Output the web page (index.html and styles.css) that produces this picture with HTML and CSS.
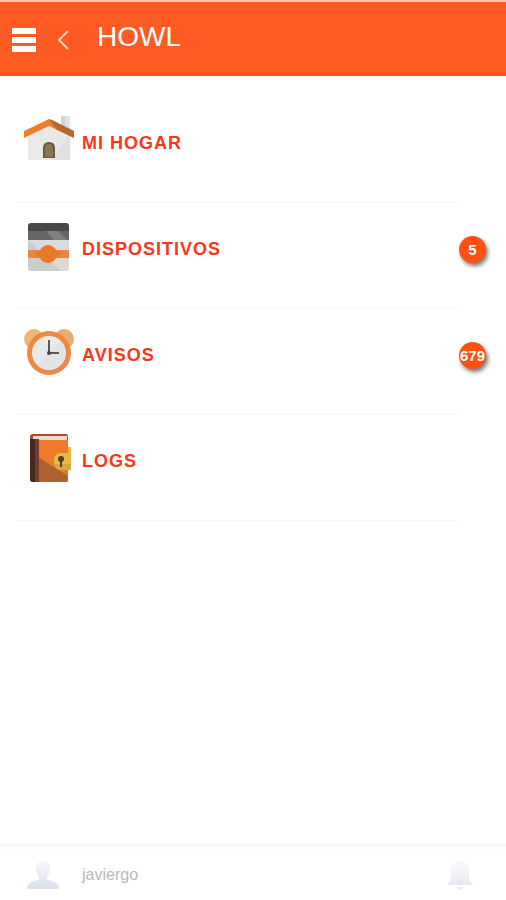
FILE: index.html
```html
<!DOCTYPE html>
<html lang="es">
<head>
<meta charset="utf-8">
<meta name="viewport" content="width=device-width, initial-scale=1">
<title>HOWL</title>
<link rel="stylesheet" href="styles.css">
</head>
<body>
<header class="bar">
  <button class="icon-button" type="button" aria-label="Menú">
    <svg width="24" height="24" viewBox="0 0 24 24" fill="#fff"><path d="M0 0h24v6H0zM0 9h24v6H0zM0 18h24v6H0z"/></svg>
  </button>
  <button class="icon-button back" type="button" aria-label="Volver">
    <svg width="12" height="20" viewBox="0 0 12 20" fill="none" stroke="#ffcdb8" stroke-width="2"><path d="M10 1 1 10l9 9"/></svg>
  </button>
  <h1 class="title">HOWL</h1>
</header>
<main class="content">
  <ul class="menu">
    <li class="item">
      <a class="link" href="#hogar">
        <svg class="picture" width="52" height="52" viewBox="0 0 52 52">
          <path fill="#e2e4e4" d="M38 1h9v19h-9z"/>
          <path fill="#d3d6d7" d="M38 1h4v12h-4z"/>
          <path fill="#e9e9e7" d="M26 8 5 18v27h42V18z"/>
          <path fill="#e1e1df" d="M47 18v27H28z"/>
          <path fill="#ed802f" d="M26 4 1 16v7l25-12 25 12v-7z"/>
          <path fill="#b76732" d="m26 4 3 1 8 11-3-1z"/>
          <path fill="#b76732" d="m29 5 22 11v7l-14-7z"/>
          <path fill="#685a42" d="M20 43V33q0-6 6-6t6 6v10z"/>
          <path fill="#8b7653" d="M22 42V33q0-4 4-4t4 4v9z"/>
        </svg>
        <span class="label">MI HOGAR</span>
      </a>
    </li>
    <li class="item">
      <a class="link" href="#dispositivos">
        <svg class="picture" width="52" height="52" viewBox="0 0 52 52">
          <path fill="#d9dcda" d="M5 16h41v31q0 3-3 3H8q-3 0-3-3z"/>
          <path fill="#c9cdcb" d="M5 19 38 50H8q-3 0-3-3z"/>
          <path fill="#666" d="M5 7h41v12H5z"/>
          <path fill="#808080" d="M23 10h12l9 9H31z"/>
          <path fill="#484848" d="M8 2h35q3 0 3 3v5H5V5q0-3 3-3z"/>
          <path fill="#ec8540" d="M5 29h41v8H5z"/>
          <circle cx="25" cy="33" r="9" fill="#ed7728"/>
          <path fill="#ed7728" d="m11 33 14-9 15 9-15 9z"/>
        </svg>
        <span class="label">DISPOSITIVOS</span>
        <span class="badge">5</span>
      </a>
    </li>
    <li class="item">
      <a class="link" href="#avisos">
        <svg class="picture" width="52" height="52" viewBox="0 0 52 52">
          <circle cx="11" cy="12" r="10" fill="#efb675"/>
          <circle cx="41" cy="12" r="10" fill="#e8ad6d"/>
          <circle cx="26" cy="26" r="22" fill="#ec8945"/>
          <circle cx="26" cy="26" r="17" fill="#e9ebeb"/>
          <path fill="#d9dcdd" d="M14 38A17 17 0 0 0 38 14z" opacity=".4"/>
          <path fill="none" stroke="#555a5b" stroke-width="2" d="M26 13v13h10"/>
          <circle cx="26" cy="26" r="2" fill="#444"/>
        </svg>
        <span class="label">AVISOS</span>
        <span class="badge">679</span>
      </a>
    </li>
    <li class="item">
      <a class="link" href="#logs">
        <svg class="picture" width="52" height="52" viewBox="0 0 52 52">
          <path fill="#a94f26" d="M10 1h33q2 0 2 3v43q0 2-2 2H10q-3 0-3-3V4q0-3 3-3z"/>
          <path fill="#eddcd0" d="M10 3h34v4H10z"/>
          <path fill="#ef792b" d="M15 7h30v40L15 25z"/>
          <path fill="#af602e" d="m15 24 30 19v4q0 2-2 2H15z"/>
          <path fill="#4b2722" d="M7 6h5v43h-2q-3 0-3-3z"/>
          <path fill="#713c28" d="M12 6h4v43h-4z"/>
          <path fill="#e9b943" d="M45 14h3v23H36q-5-3-5-9t5-8h9z"/>
          <path fill="#d7a83f" d="M32 31h16v6H36q-3-2-4-6z"/>
          <circle cx="38" cy="26" r="3" fill="#4e4026"/>
          <path fill="#4e4026" d="M37 26h2v8h-2z"/>
        </svg>
        <span class="label">LOGS</span>
      </a>
    </li>
  </ul>
</main>
<footer class="footer">
  <svg width="34" height="30" viewBox="0 0 34 30">
    <defs>
      <linearGradient id="fade" x1="0" y1="0" x2="0" y2="1"><stop offset="0" stop-color="#f7f8fa"/><stop offset="1" stop-color="#dbe0ec"/></linearGradient>
      <linearGradient id="fade-light" x1="0" y1="0" x2="0" y2="1"><stop offset="0" stop-color="#fafbfc"/><stop offset="1" stop-color="#e6e9f1"/></linearGradient>
    </defs>
    <path fill="url(#fade)" d="M17 1c5 0 7 3 7 7 0 5-2 7-3 9v2c1 2 12 2 12 9 0 1-1 1-2 1H3c-1 0-2 0-2-1 0-7 11-7 12-9v-2c-1-2-3-4-3-9 0-4 2-7 7-7z"/>
  </svg>
  <span class="user">javiergo</span>
  <button class="icon-button" type="button" aria-label="Notificaciones">
    <svg width="26" height="32" viewBox="0 0 26 32"><path fill="url(#fade-light)" d="M13 1c2 0 3 1 3 2 4 1 6 4 6 8v8c0 4 3 3 3 7H1c0-4 3-3 3-7v-8c0-4 2-7 6-8 0-1 1-2 3-2z"/><path fill="#eceef3" d="M10 28h6q-1 3-3 3t-3-3z"/></svg>
  </button>
</footer>
</body>
</html>
```
FILE: styles.css
```css
* {
  box-sizing: border-box;
}

body {
  margin: 0;
  min-height: 100vh;
  display: flex;
  flex-direction: column;
  background: #fff;
  font-family: "Liberation Sans", Arial, sans-serif;
}

.bar {
  display: flex;
  align-items: center;
  height: 76px;
  padding: 2px 12px 0;
  border-top: 2px solid #f9c5bd;
  border-bottom: 1px solid #f4511e;
  background: #ff5a21;
}

.icon-button {
  display: flex;
  padding: 0;
  border: 0;
  background: none;
  cursor: pointer;
}

.back {
  margin-left: 22px;
}

.title {
  margin: 0 0 6px 27px;
  color: #fff;
  font-size: 28px;
  font-weight: 400;
  line-height: 32px;
}

.content {
  flex: 1;
  padding-top: 21px;
}

.menu {
  margin: 0;
  padding: 0;
  list-style: none;
}

.item::after {
  content: "";
  display: block;
  height: 1px;
  margin: 0 46px 0 16px;
  background: #f6f6f6;
}

.link {
  display: flex;
  align-items: center;
  height: 105px;
  padding: 0 20px 12px 23px;
  color: #f9371b;
  text-decoration: none;
}

.picture {
  flex: none;
  margin-bottom: 6px;
}

.label {
  flex: 1;
  margin-left: 7px;
  font-size: 18px;
  font-weight: 700;
  letter-spacing: 1px;
}

.badge {
  display: flex;
  align-items: center;
  justify-content: center;
  width: 27px;
  height: 27px;
  border-radius: 50%;
  background: #ff5112;
  box-shadow: 2px 3px 4px #777;
  color: #fff;
  font-size: 15px;
  font-weight: 700;
}

.footer {
  display: flex;
  align-items: center;
  height: 56px;
  padding: 4px 33px 0 26px;
  border-top: 1px solid #f4f4f4;
  background: linear-gradient(#fafafa, #fff 8px);
}

.user {
  flex: 1;
  margin-left: 22px;
  color: #b9b9b9;
  font-size: 16px;
}
```
